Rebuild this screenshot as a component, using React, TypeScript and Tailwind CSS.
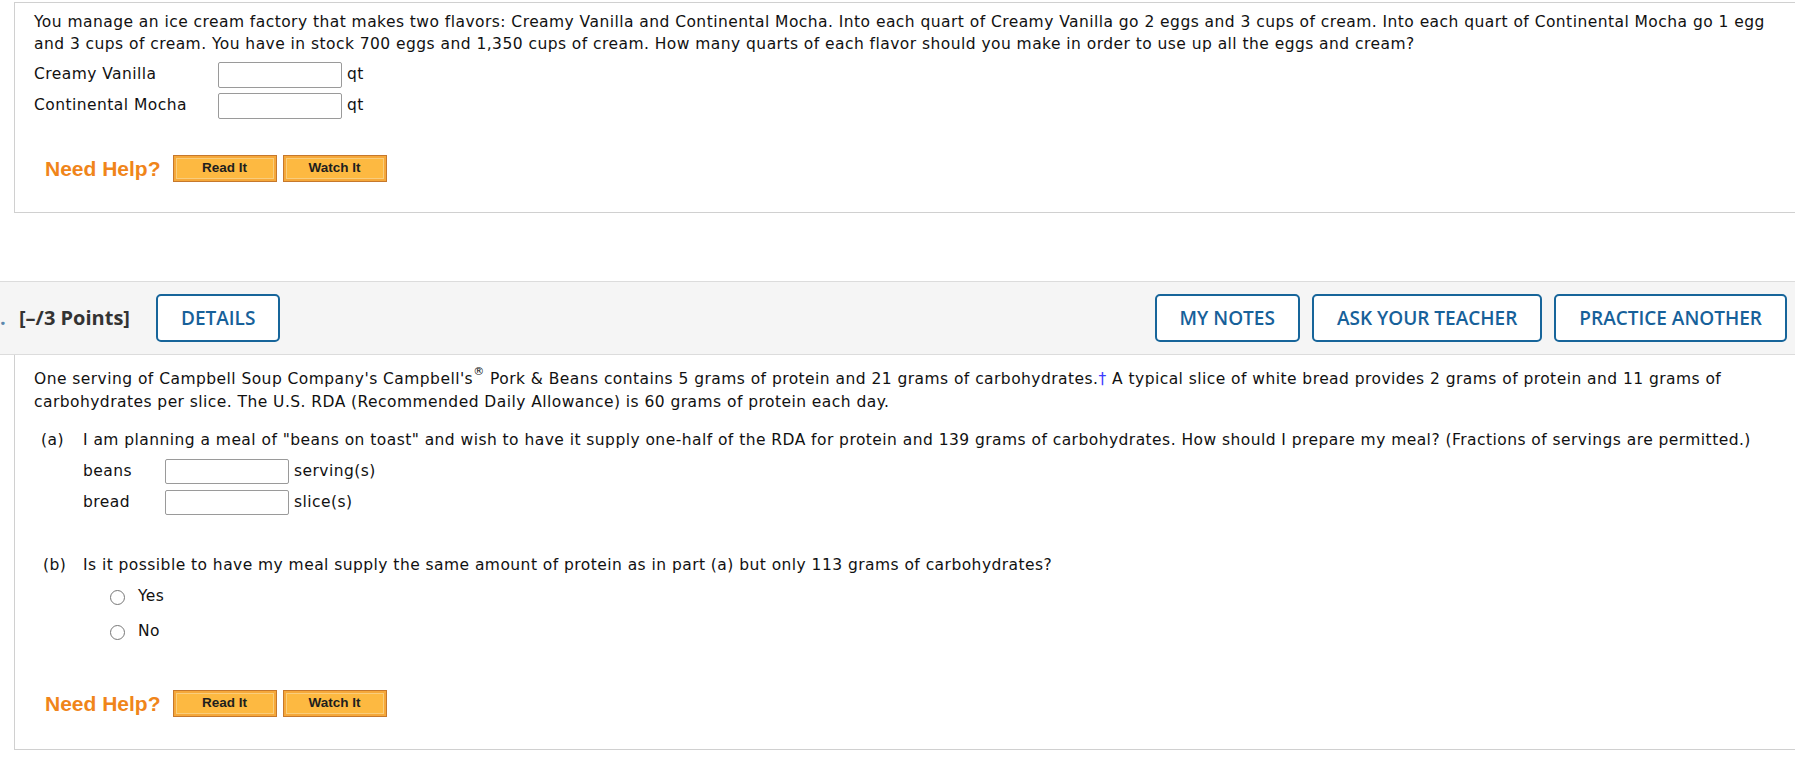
import React from 'react'

const body = { fontFamily: '"DejaVu Sans", Verdana, sans-serif' }
const head = { fontFamily: '"Open Sans", sans-serif' }

function HelpRow({ className }: { className: string }) {
  return (
    <div className={`flex items-center h-[27px] ${className}`}>
      <span
        className="ml-[11px] text-[21px] font-bold text-[#f0851a] leading-none tracking-normal"
        style={{ fontFamily: '"Liberation Sans", Arial, sans-serif' }}
      >
        Need Help?
      </span>
      <HelpButton label="Read It" className="ml-[12px]" />
      <HelpButton label="Watch It" className="ml-[6px]" />
    </div>
  )
}

function HelpButton({ label, className }: { label: string; className: string }) {
  return (
    <div className={`w-[104px] h-[27px] border border-[#c6782c] bg-[#f5a83a] p-[2px] ${className}`}>
      <div
        className="h-full border border-[#f9cd7c] bg-[#fdb941] flex items-center justify-center text-[13.5px] font-bold text-[#1e1e1e] tracking-normal"
        style={{ fontFamily: '"Liberation Sans", Arial, sans-serif' }}
      >
        {label}
      </div>
    </div>
  )
}

function Field({ label, unit, labelWidth, h }: { label: string; unit: string; labelWidth: string; h: string }) {
  return (
    <div className={`flex items-center ${h}`}>
      <span className={labelWidth}>{label}</span>
      <input className={`w-[124px] ${h} border border-[#9a9a9a] rounded-[2px] bg-white`} />
      <span className="ml-[5px]">{unit}</span>
    </div>
  )
}

function Radio({ label, className }: { label: string; className: string }) {
  return (
    <div className={`flex items-center h-[22px] pl-[110px] ${className}`}>
      <span className="w-[15px] h-[15px] rounded-full border border-[#777] bg-white" />
      <span className="ml-[13px]">{label}</span>
    </div>
  )
}

function OutlineButton({ label }: { label: string }) {
  return (
    <button
      className="h-[48px] px-[23px] border-2 border-[#17659a] rounded-[5px] bg-white text-[19px] font-semibold text-[#17619a]"
      style={head}
    >
      {label}
    </button>
  )
}

export default function App() {
  return (
    <div className="w-[1795px] h-[781px] overflow-hidden bg-white text-[15.5px] tracking-[0.45px] text-[#111]" style={body}>
      {/* first question */}
      <div className="ml-[14px] mt-[2px] border-l border-y border-[#d0d0d0] pl-[19px] pt-[8px] pb-[30px]">
        <p className="leading-[22px] whitespace-nowrap">
          You manage an ice cream factory that makes two flavors: Creamy Vanilla and Continental Mocha. Into each quart of Creamy Vanilla go 2 eggs and 3 cups of cream. Into each quart of Continental Mocha go 1 egg
          <br />
          and 3 cups of cream. You have in stock 700 eggs and 1,350 cups of cream. How many quarts of each flavor should you make in order to use up all the eggs and cream?
        </p>
        <div className="mt-[7px] flex flex-col gap-[5px]">
          <Field label="Creamy Vanilla" unit="qt" labelWidth="w-[184px]" h="h-[26px]" />
          <Field label="Continental Mocha" unit="qt" labelWidth="w-[184px]" h="h-[26px]" />
        </div>
        <HelpRow className="mt-[36px]" />
      </div>

      {/* header of next question */}
      <div className="mt-[68px] h-[74px] border-y border-[#dcdcdc] bg-[#f5f5f5] flex items-center justify-between pr-[8px] tracking-normal" style={head}>
        <div className="flex items-center">
          <span className="text-[20px] font-bold text-[#5b87ad] w-[19px]">.</span>
          <span className="text-[20px] font-bold text-[#333]">[–/3 Points]</span>
          <div className="ml-[26px]">
            <OutlineButton label="DETAILS" />
          </div>
        </div>
        <div className="flex items-center gap-[12px]">
          <OutlineButton label="MY NOTES" />
          <OutlineButton label="ASK YOUR TEACHER" />
          <OutlineButton label="PRACTICE ANOTHER" />
        </div>
      </div>

      {/* second question */}
      <div className="ml-[14px] border-l border-b border-[#d0d0d0] pl-[19px] pt-[13px] pb-[32px]">
        <p className="leading-[23px] whitespace-nowrap">
          One serving of Campbell Soup Company's Campbell's<sup className="text-[11px] align-[4px]">®</sup> Pork &amp; Beans contains 5 grams of protein and 21 grams of carbohydrates.<span className="text-[#3b3bff]">†</span> A typical slice of white bread provides 2 grams of protein and 11 grams of
          <br />
          carbohydrates per slice. The U.S. RDA (Recommended Daily Allowance) is 60 grams of protein each day.
        </p>
        <div className="mt-[15px] flex leading-[22px] whitespace-nowrap">
          <span className="ml-[7px] w-[42px]">(a)</span>
          <span>
            I am planning a meal of "beans on toast" and wish to have it supply one-half of the RDA for protein and 139 grams of carbohydrates. How should I prepare my meal? (Fractions of servings are permitted.)
          </span>
        </div>
        <div className="mt-[8px] ml-[49px] flex flex-col gap-[6px]">
          <Field label="beans" unit="serving(s)" labelWidth="w-[82px]" h="h-[25px]" />
          <Field label="bread" unit="slice(s)" labelWidth="w-[82px]" h="h-[25px]" />
        </div>
        <div className="mt-[39px] flex leading-[22px] whitespace-nowrap">
          <span className="ml-[9px] w-[40px]">(b)</span>
          <span>Is it possible to have my meal supply the same amount of protein as in part (a) but only 113 grams of carbohydrates?</span>
        </div>
        <div className="-ml-[34px]">
          <Radio label="Yes" className="mt-[10px]" />
          <Radio label="No" className="mt-[13px]" />
        </div>
        <HelpRow className="mt-[47px]" />
      </div>
    </div>
  )
}
